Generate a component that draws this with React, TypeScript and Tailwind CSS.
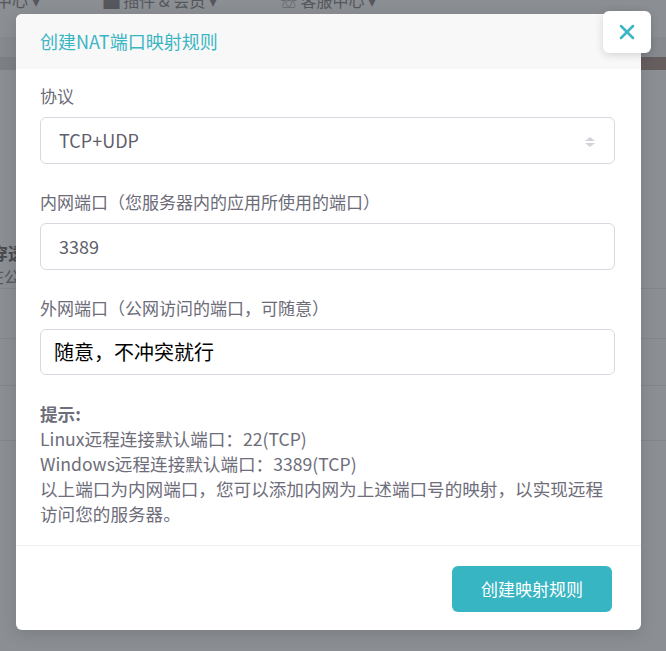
import { X } from "lucide-react";

const font = { fontFamily: '"Noto Sans CJK SC", "Noto Sans", sans-serif' };

function Field({ label, children }: { label: string; children: React.ReactNode }) {
  return (
    <div className="flex flex-col">
      <label className="text-[17px] leading-[22px] text-[#6c6b78]">{label}</label>
      <div className="mt-[10px]">{children}</div>
    </div>
  );
}

export default function App() {
  return (
    <div className="relative w-[666px] h-[651px] overflow-hidden bg-[#8b8e92]" style={font}>
      {/* dimmed page behind the overlay */}
      <div className="absolute left-0 right-0 top-[-12px] flex items-center text-[16px] text-[#55575c] whitespace-nowrap">
        <span className="ml-[-4px]">中心 ▾</span>
        <span className="ml-[64px]">▆ 插件 &amp; 会员 ▾</span>
        <span className="ml-[64px]">☏ 客服中心 ▾</span>
      </div>
      <div className="absolute left-0 right-0 top-[37px] h-[20px] bg-[#86898d]" />
      <div className="absolute left-0 right-0 top-[57px] h-[13px] bg-[#7c7f84]" />
      <div className="absolute right-0 top-[57px] w-[30px] h-[13px] bg-[#665d5f]" />
      <div className="absolute left-0 right-0 top-[288px] h-px bg-[#828589]" />
      <div className="absolute left-0 right-0 top-[338px] h-px bg-[#828589]" />
      <div className="absolute left-0 right-0 top-[385px] h-px bg-[#828589]" />
      <div className="absolute left-0 right-0 top-[440px] h-px bg-[#828589]" />
      <div className="absolute left-[-9px] top-[240px] text-[17px] font-bold text-[#47494d]">穿透</div>
      <div className="absolute left-[-12px] top-[264px] text-[16px] text-[#55575c]">在公</div>

      {/* modal */}
      <div className="absolute left-[16px] top-[14px] w-[625px] h-[616px] bg-white rounded-[6px] flex flex-col shadow-[0_4px_16px_rgba(0,0,0,0.12)]">
        <div className="h-[55px] bg-[#f8f8f8] rounded-t-[6px] flex items-center px-[24px]">
          <h2 className="text-[18px] text-[#3ab5c3] font-normal">创建NAT端口映射规则</h2>
        </div>
        <button className="absolute right-[-10px] top-[-3px] w-[48px] h-[42px] bg-white rounded-[6px] flex items-center justify-center shadow-[0_2px_8px_rgba(0,0,0,0.15)]">
          <X className="w-[24px] h-[24px] text-[#3ab5c3]" strokeWidth={2.5} />
        </button>

        <div className="flex-1 pl-[24px] pr-[26px] pt-[16px] pb-[16px] flex flex-col gap-[27px]">
          <Field label="协议">
            <div className="relative h-[47px] border border-[#d9d8e1] rounded-[6px] flex items-center pl-[18px] text-[18px] text-[#5f5e6b]">
              TCP+UDP
              <svg className="absolute right-[18px] top-[18px]" width="12" height="12" viewBox="0 0 12 12">
                <path d="M6 1 L11 5 H1 Z" fill="#d3d2db" />
                <path d="M1 7 H11 L6 11 Z" fill="#d3d2db" />
              </svg>
            </div>
          </Field>
          <Field label="内网端口（您服务器内的应用所使用的端口）">
            <div className="h-[47px] border border-[#d9d8e1] rounded-[6px] flex items-center pl-[18px] text-[18px] text-[#5f5e6b]">
              3389
            </div>
          </Field>
          <Field label="外网端口（公网访问的端口，可随意）">
            <div className="h-[46px] border border-[#d9d8e1] rounded-[6px] flex items-center pl-[13px] text-[20px] text-black">
              随意，不冲突就行
            </div>
          </Field>
          <div className="text-[17.6px] leading-[25px] text-[#6e6d7a] -mt-px">
            <div className="font-bold">提示:</div>
            <div>Linux远程连接默认端口：22(TCP)</div>
            <div>Windows远程连接默认端口：3389(TCP)</div>
            <div>以上端口为内网端口，您可以添加内网为上述端口号的映射，以实现远程访问您的服务器。</div>
          </div>
        </div>

        <div className="h-[85px] border-t border-[#efeff2] flex items-start justify-end pt-[20px] pr-[29px]">
          <button className="w-[160px] h-[46px] bg-[#37b5c2] rounded-[6px] text-white text-[17px]">
            创建映射规则
          </button>
        </div>
      </div>
    </div>
  );
}
